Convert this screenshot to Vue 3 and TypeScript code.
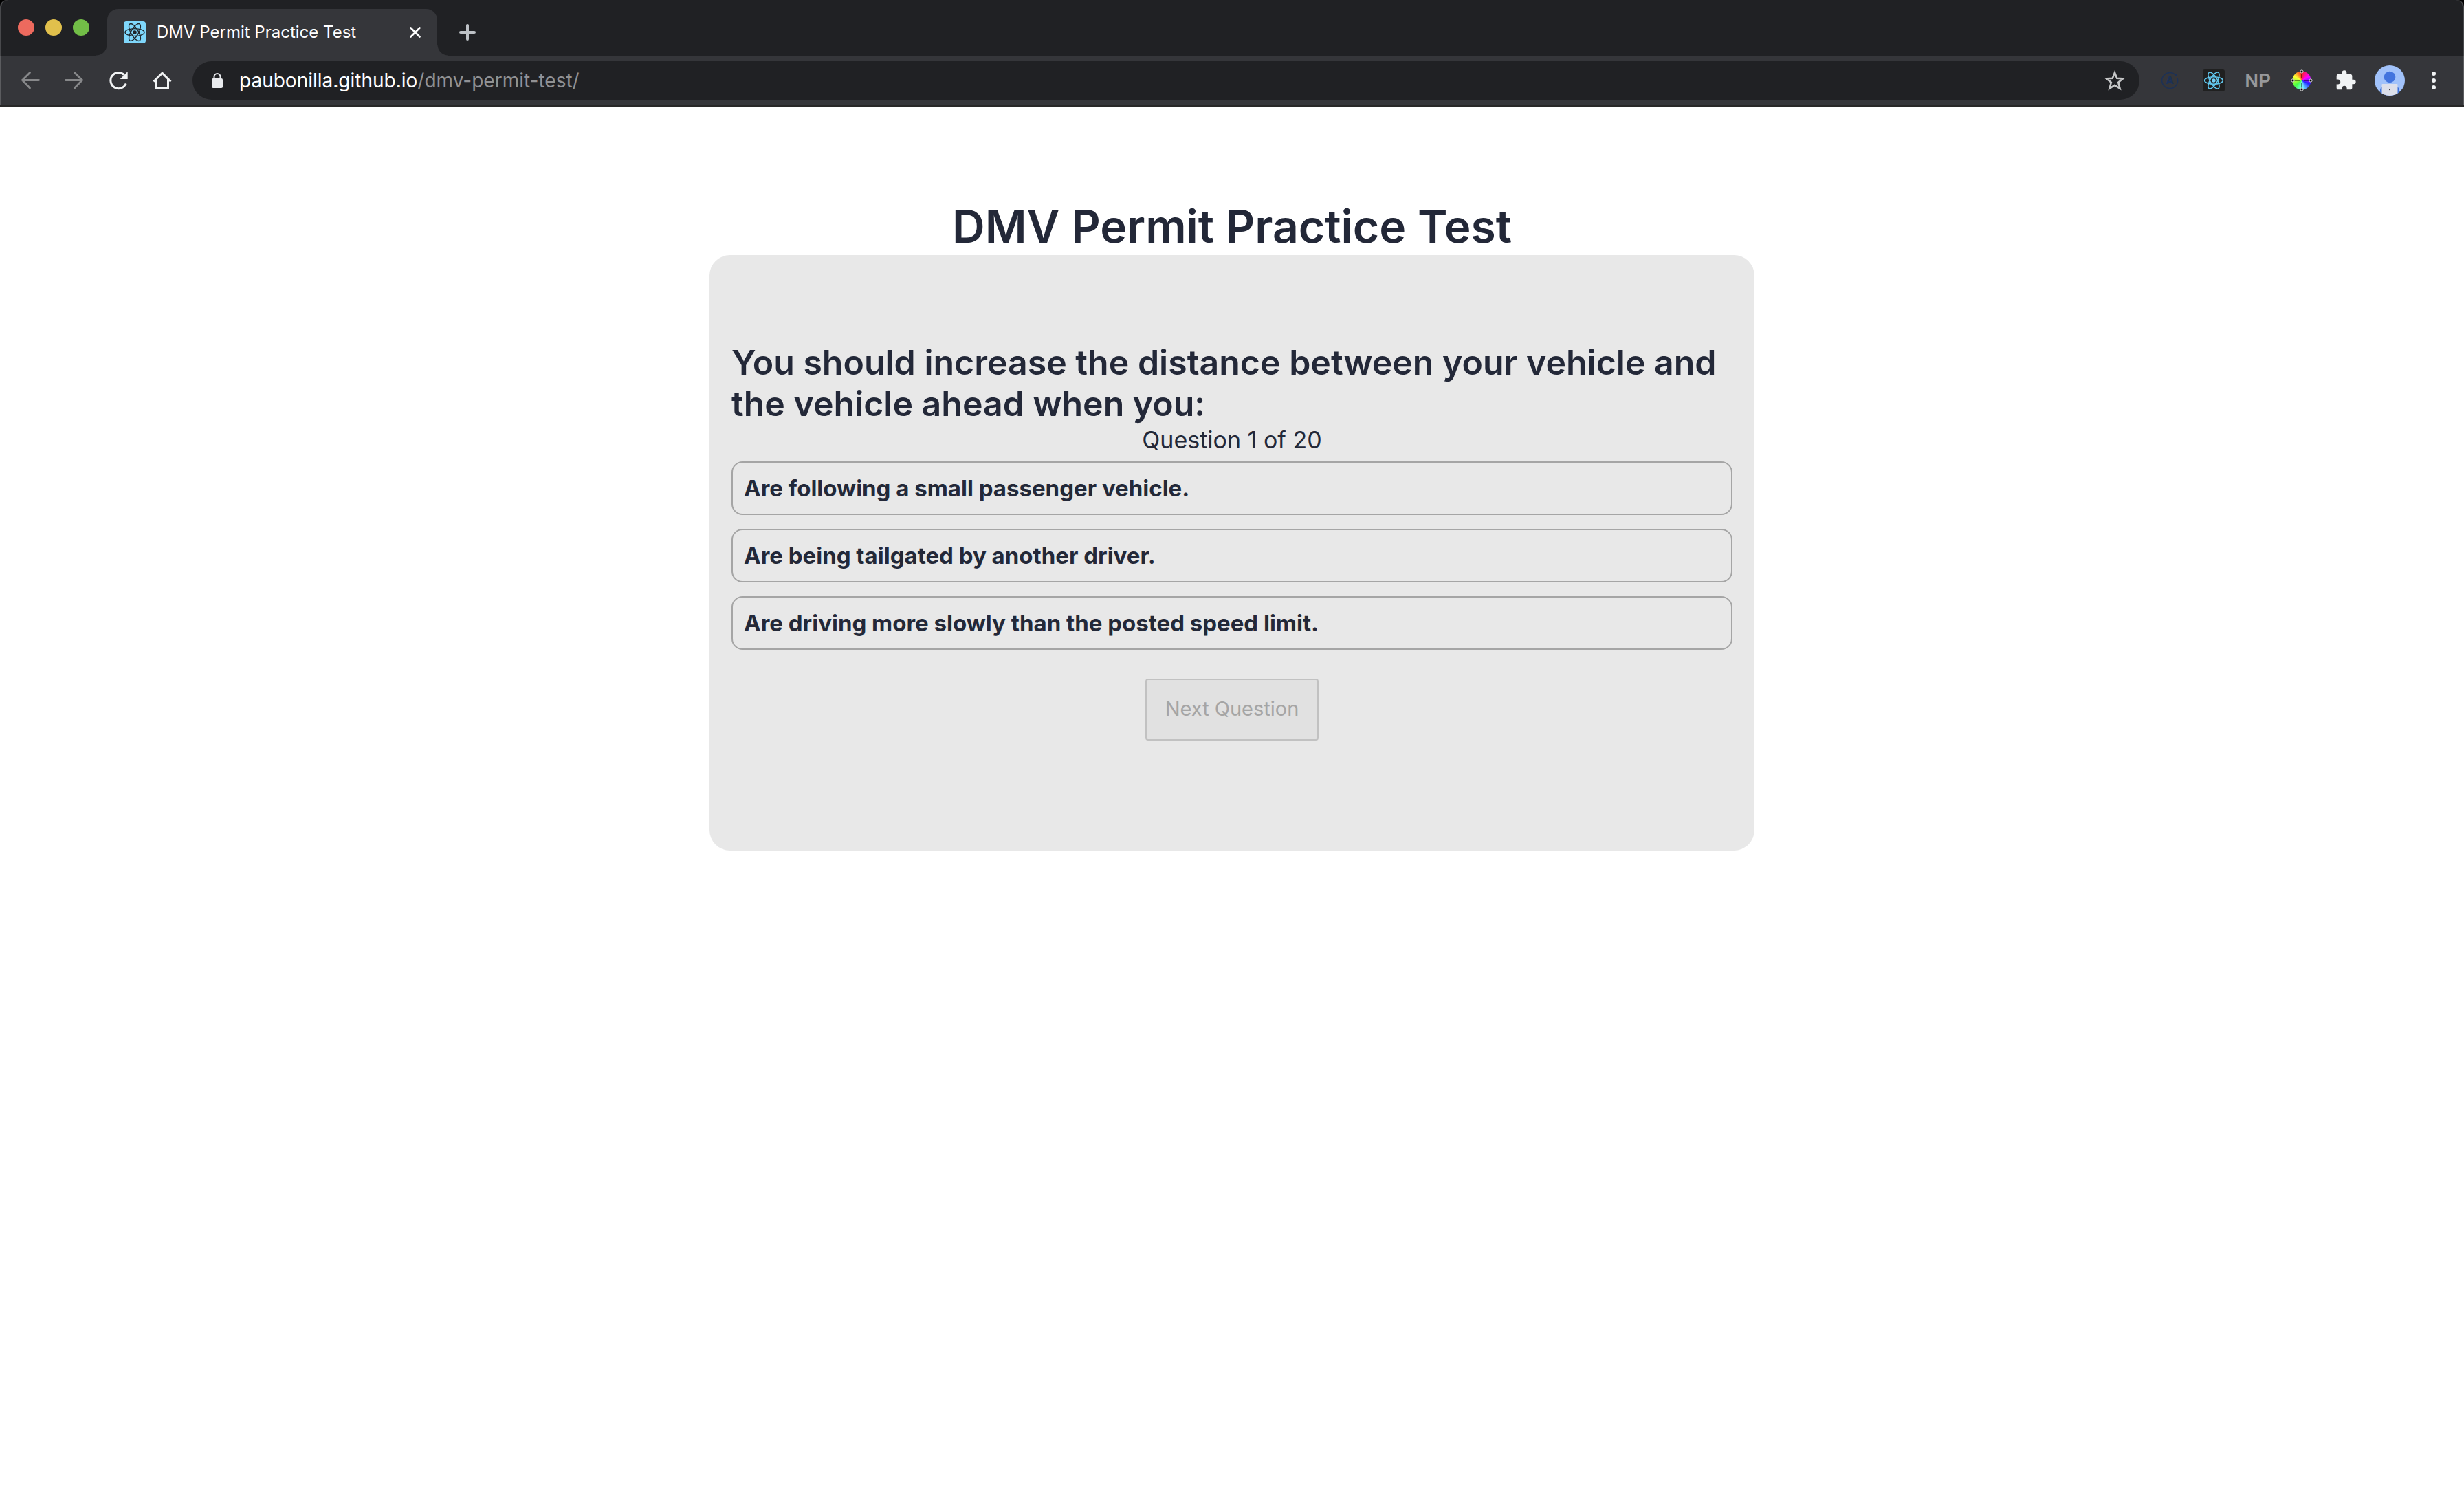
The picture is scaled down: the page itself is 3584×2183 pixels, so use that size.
<script setup lang="ts">
import { ref } from 'vue'

const pageTitle = 'DMV Permit Practice Test'
const question = 'You should increase the distance between your vehicle and the vehicle ahead when you:'
const current = 1
const total = 20
const answers: string[] = [
  'Are following a small passenger vehicle.',
  'Are being tailgated by another driver.',
  'Are driving more slowly than the posted speed limit.',
]
const selected = ref<number | null>(null)
const orbits: number[] = [0, 60, 120]
</script>

<template>
  <div class="window">
    <header class="chrome">
      <div class="tabstrip">
        <div class="lights">
          <button class="light red" aria-label="Close window"></button>
          <button class="light yellow" aria-label="Minimize window"></button>
          <button class="light green" aria-label="Zoom window"></button>
        </div>
        <div class="tab">
          <svg class="favicon" viewBox="0 0 32 32" aria-hidden="true">
            <rect width="32" height="32" rx="4" fill="#7fd7fb" />
            <g fill="none" stroke="#20262b" stroke-width="1.4">
              <ellipse v-for="a in orbits" :key="a" cx="16" cy="16" rx="14" ry="5.4" :transform="`rotate(${a} 16 16)`" />
            </g>
            <circle cx="16" cy="16" r="2.8" fill="#20262b" />
          </svg>
          <span class="tab-title">{{ pageTitle }}</span>
          <button class="tab-close" aria-label="Close tab">
            <svg width="16" height="16" viewBox="0 0 16 16"><path d="M1.5 1.5 14.5 14.5M14.5 1.5 1.5 14.5" stroke="#fff" stroke-width="2.6" stroke-linecap="round" /></svg>
          </button>
        </div>
        <button class="new-tab" aria-label="New tab">
          <svg width="24" height="24" viewBox="0 0 24 24"><path d="M12 2V22M2 12H22" stroke="#bdc1c6" stroke-width="4" stroke-linecap="round" /></svg>
        </button>
      </div>

      <div class="toolbar">
        <button class="tool" aria-label="Back">
          <svg width="32" height="32" viewBox="0 0 32 32" fill="none" stroke="#87888a" stroke-width="2.8" stroke-linecap="round"><path d="M28.5 15.5H4.5M15.5 4.5 4.5 15.5 15.5 27" /></svg>
        </button>
        <button class="tool" aria-label="Forward">
          <svg width="32" height="32" viewBox="0 0 32 32" fill="none" stroke="#87888a" stroke-width="2.8" stroke-linecap="round"><path d="M3.5 15.5H27.5M16.5 4.5 27.5 15.5 16.5 27" /></svg>
        </button>
        <button class="tool" aria-label="Reload">
          <svg width="32" height="32" viewBox="0 0 32 32"><path d="M27.2 20.5A11.6 11.6 0 1 1 24.5 7.6" fill="none" stroke="#f1f3f4" stroke-width="3" /><path d="M29.7 3V14H18.7Z" fill="#f1f3f4" /></svg>
        </button>
        <button class="tool" aria-label="Home">
          <svg width="32" height="32" viewBox="0 0 32 32"><path d="M16 3 29.5 16.5 27.5 18.5 26 17V29H6V17L4.5 18.5 2.5 16.5ZM16 7.2 9 14.2V26H23V14.2Z" fill="#f1f3f4" fill-rule="evenodd" /></svg>
        </button>

        <div class="omnibox">
          <svg width="16" height="22" viewBox="0 0 16 22" aria-hidden="true"><path d="M3.5 9V5.5a4.5 4.5 0 0 1 9 0V9" fill="none" stroke="#e8eaed" stroke-width="2" /><rect y="8" width="16" height="14" rx="2" fill="#e8eaed" /></svg>
          <span class="url"><span class="host">paubonilla.github.io</span>/dmv-permit-test/</span>
          <button aria-label="Bookmark this tab">
            <svg width="32" height="32" viewBox="0 0 32 32"><path d="M16 4.5 19.2 12.7 28 13.3 21.2 18.8 23.5 27.6 16 22.8 8.5 27.6 10.8 18.8 4 13.3 12.8 12.7Z" fill="none" stroke="#c6c7c8" stroke-width="2.6" /></svg>
          </button>
        </div>

        <button class="tool" aria-label="Apollo Client Devtools">
          <svg width="32" height="32" viewBox="0 0 32 32"><path d="M24.5 8.2A11.5 11.5 0 1 0 27.2 13" fill="none" stroke="#1c3157" stroke-width="1.5" /><circle cx="24.8" cy="8.2" r="1.7" fill="#1c3157" /><text x="16" y="21" text-anchor="middle" font-size="15" font-weight="800" fill="#1c3157">A</text></svg>
        </button>
        <button class="tool" aria-label="React Developer Tools">
          <svg width="32" height="32" viewBox="0 0 32 32">
            <rect width="32" height="32" rx="3" fill="#202020" />
            <g fill="none" stroke="#61c9f0" stroke-width="1.5">
              <ellipse v-for="a in orbits" :key="a" cx="16" cy="16" rx="13.4" ry="5.2" :transform="`rotate(${a} 16 16)`" />
            </g>
            <circle cx="16" cy="16" r="2.7" fill="#72cdf3" />
          </svg>
        </button>
        <button class="tool np">NP</button>
        <button class="tool" aria-label="Color picker">
          <span class="wheel">
            <svg width="32" height="32" viewBox="0 0 32 32">
              <path d="M16 5V13M16 19V27M5 16H13M19 16H27" stroke="#000" stroke-opacity=".45" stroke-width="2" />
              <g fill="#000" stroke="#ddd" stroke-width="1"><circle cx="16" cy="3" r="2.1" /><circle cx="16" cy="29" r="2.1" /><circle cx="3" cy="16" r="2.1" /><circle cx="29" cy="16" r="2.1" /></g>
            </svg>
          </span>
        </button>
        <button class="tool" aria-label="Extensions">
          <svg width="32" height="32" viewBox="0 0 24 24"><path fill="#f1f3f4" d="M20.5 11H19V7c0-1.1-.9-2-2-2h-4V3.5a2.5 2.5 0 0 0-5 0V5H4c-1.1 0-1.99.9-1.99 2v3.8H3.5c1.49 0 2.7 1.21 2.7 2.7s-1.21 2.7-2.7 2.7H2V20c0 1.1.9 2 2 2h3.8v-1.5c0-1.49 1.21-2.7 2.7-2.7 1.49 0 2.7 1.21 2.7 2.7V22H17c1.1 0 2-.9 2-2v-4h1.5a2.5 2.5 0 0 0 0-5z" /></svg>
        </button>
        <button class="tool" aria-label="Profile">
          <svg width="44" height="44" viewBox="0 0 44 44">
            <clipPath id="face"><circle cx="22" cy="22" r="22" /></clipPath>
            <g clip-path="url(#face)">
              <rect width="44" height="44" fill="#a1c2fa" />
              <circle cx="22" cy="17" r="8.3" fill="#4274de" />
              <rect x="8" y="31" width="28" height="20" rx="5" fill="#3b70dc" />
              <rect x="10.5" y="27" width="23" height="17" rx="1" fill="#dcdfea" />
              <circle cx="22" cy="35.3" r="1" fill="#333" />
            </g>
          </svg>
        </button>
        <button class="tool" aria-label="Menu">
          <svg width="32" height="32" viewBox="0 0 32 32" fill="#f1f3f4"><circle cx="16" cy="6" r="3" /><circle cx="16" cy="16" r="3" /><circle cx="16" cy="26" r="3" /></svg>
        </button>
      </div>
    </header>

    <main class="page">
      <h1>{{ pageTitle }}</h1>
      <section class="card">
        <h2>{{ question }}</h2>
        <p class="count">Question {{ current }} of {{ total }}</p>
        <div class="answers">
          <button v-for="(answer, i) in answers" :key="answer" class="answer" @click="selected = i">{{ answer }}</button>
        </div>
        <button class="next" :disabled="selected === null">Next Question</button>
      </section>
    </main>
  </div>
</template>

<style>
body {
  margin: 0;
  background: #fff;
}
</style>

<style scoped>
.window {
  font-family: Inter, "Liberation Sans", sans-serif;
  color: #232838;
}
button {
  margin: 0;
  padding: 0;
  border: 0;
  background: none;
  font-family: inherit;
  color: inherit;
}
svg {
  display: block;
}
.chrome {
  background: #000;
  border-bottom: 2px solid #282828;
}
.tabstrip {
  display: flex;
  height: 81px;
  box-sizing: border-box;
  padding-top: 13px;
  border-radius: 10px 10px 0 0;
  background: #202124;
  box-shadow: inset 2px 0 #48494c, inset -2px 0 #48494c;
}
.lights {
  display: flex;
  gap: 16px;
  width: 156px;
  box-sizing: border-box;
  padding: 15px 0 0 26px;
}
.light {
  width: 24px;
  height: 24px;
  border-radius: 50%;
}
.red { background: #ed6a5e; }
.yellow { background: #e1c04c; }
.green { background: #72be47; }
.tab {
  position: relative;
  display: flex;
  align-items: center;
  gap: 16px;
  width: 480px;
  box-sizing: border-box;
  padding: 0 24px;
  background: #35363a;
  border-radius: 16px 16px 0 0;
}
.tab::before,
.tab::after {
  content: "";
  position: absolute;
  bottom: 0;
  width: 16px;
  height: 16px;
}
.tab::before {
  right: 100%;
  background: radial-gradient(circle at 0 0, transparent 15px, #35363a 16px);
}
.tab::after {
  left: 100%;
  background: radial-gradient(circle at 100% 0, transparent 15px, #35363a 16px);
}
.favicon {
  width: 32px;
  height: 32px;
}
.tab-title {
  flex: 1;
  font-size: 24px;
  line-height: 32px;
  color: #fff;
}
.tab-close {
  width: 16px;
  height: 16px;
}
.new-tab {
  width: 24px;
  height: 24px;
  margin: 22px 32px;
}
.toolbar {
  display: flex;
  align-items: center;
  height: 72px;
  padding: 0 12px;
  background: #35363a;
  box-shadow: inset 2px 0 #5b5c5f, inset -2px 0 #5b5c5f;
}
.tool {
  display: flex;
  flex: none;
  align-items: center;
  justify-content: center;
  width: 64px;
  height: 64px;
}
.omnibox {
  display: flex;
  flex: 1;
  align-items: center;
  height: 56px;
  margin: 0 12px;
  box-sizing: border-box;
  padding: 0 20px 0 28px;
  border-radius: 28px;
  background: #202124;
}
.url {
  flex: 1;
  margin-left: 24px;
  font-size: 28px;
  line-height: 36px;
  color: #909194;
}
.host {
  color: #fff;
}
.np {
  font-family: Roboto, "Liberation Sans", sans-serif;
  font-size: 28px;
  font-weight: 500;
  color: #97989a;
}
.wheel {
  width: 32px;
  height: 32px;
  background: radial-gradient(circle, transparent 13px, #35363a 14px), conic-gradient(#f22, #f0f 60deg, #22f 115deg, #7ff 175deg, #4f4 230deg, #ff3 300deg, #f22);
}
.page {
  display: flex;
  flex-direction: column;
  align-items: center;
  padding: 132px 32px;
}
h1 {
  margin: 0;
  font-size: 66px;
  line-height: 84px;
  font-weight: 600;
}
.card {
  display: flex;
  flex-direction: column;
  align-items: center;
  width: 100%;
  max-width: 1520px;
  box-sizing: border-box;
  padding: 126px 32px 160px;
  border-radius: 30px;
  background: #e8e8e8;
}
h2 {
  width: 100%;
  margin: 0;
  font-size: 50px;
  line-height: 60px;
  font-weight: 600;
}
.count {
  margin: 0 0 8px;
  font-size: 34px;
  line-height: 46px;
}
.answers {
  display: flex;
  flex-direction: column;
  gap: 20px;
  width: 100%;
}
.answer {
  padding: 18px 16px;
  border: 2px solid #a5a5a5;
  border-radius: 16px;
  font-size: 33px;
  line-height: 38px;
  font-weight: 700;
  text-align: left;
}
.next {
  margin-top: 42px;
  padding: 23px 27px 25px;
  border: 2px solid #c1c1c1;
  border-radius: 4px;
  background: #e1e1e1;
  font-size: 29px;
  line-height: 38px;
  color: #a5a5a5;
}
</style>
